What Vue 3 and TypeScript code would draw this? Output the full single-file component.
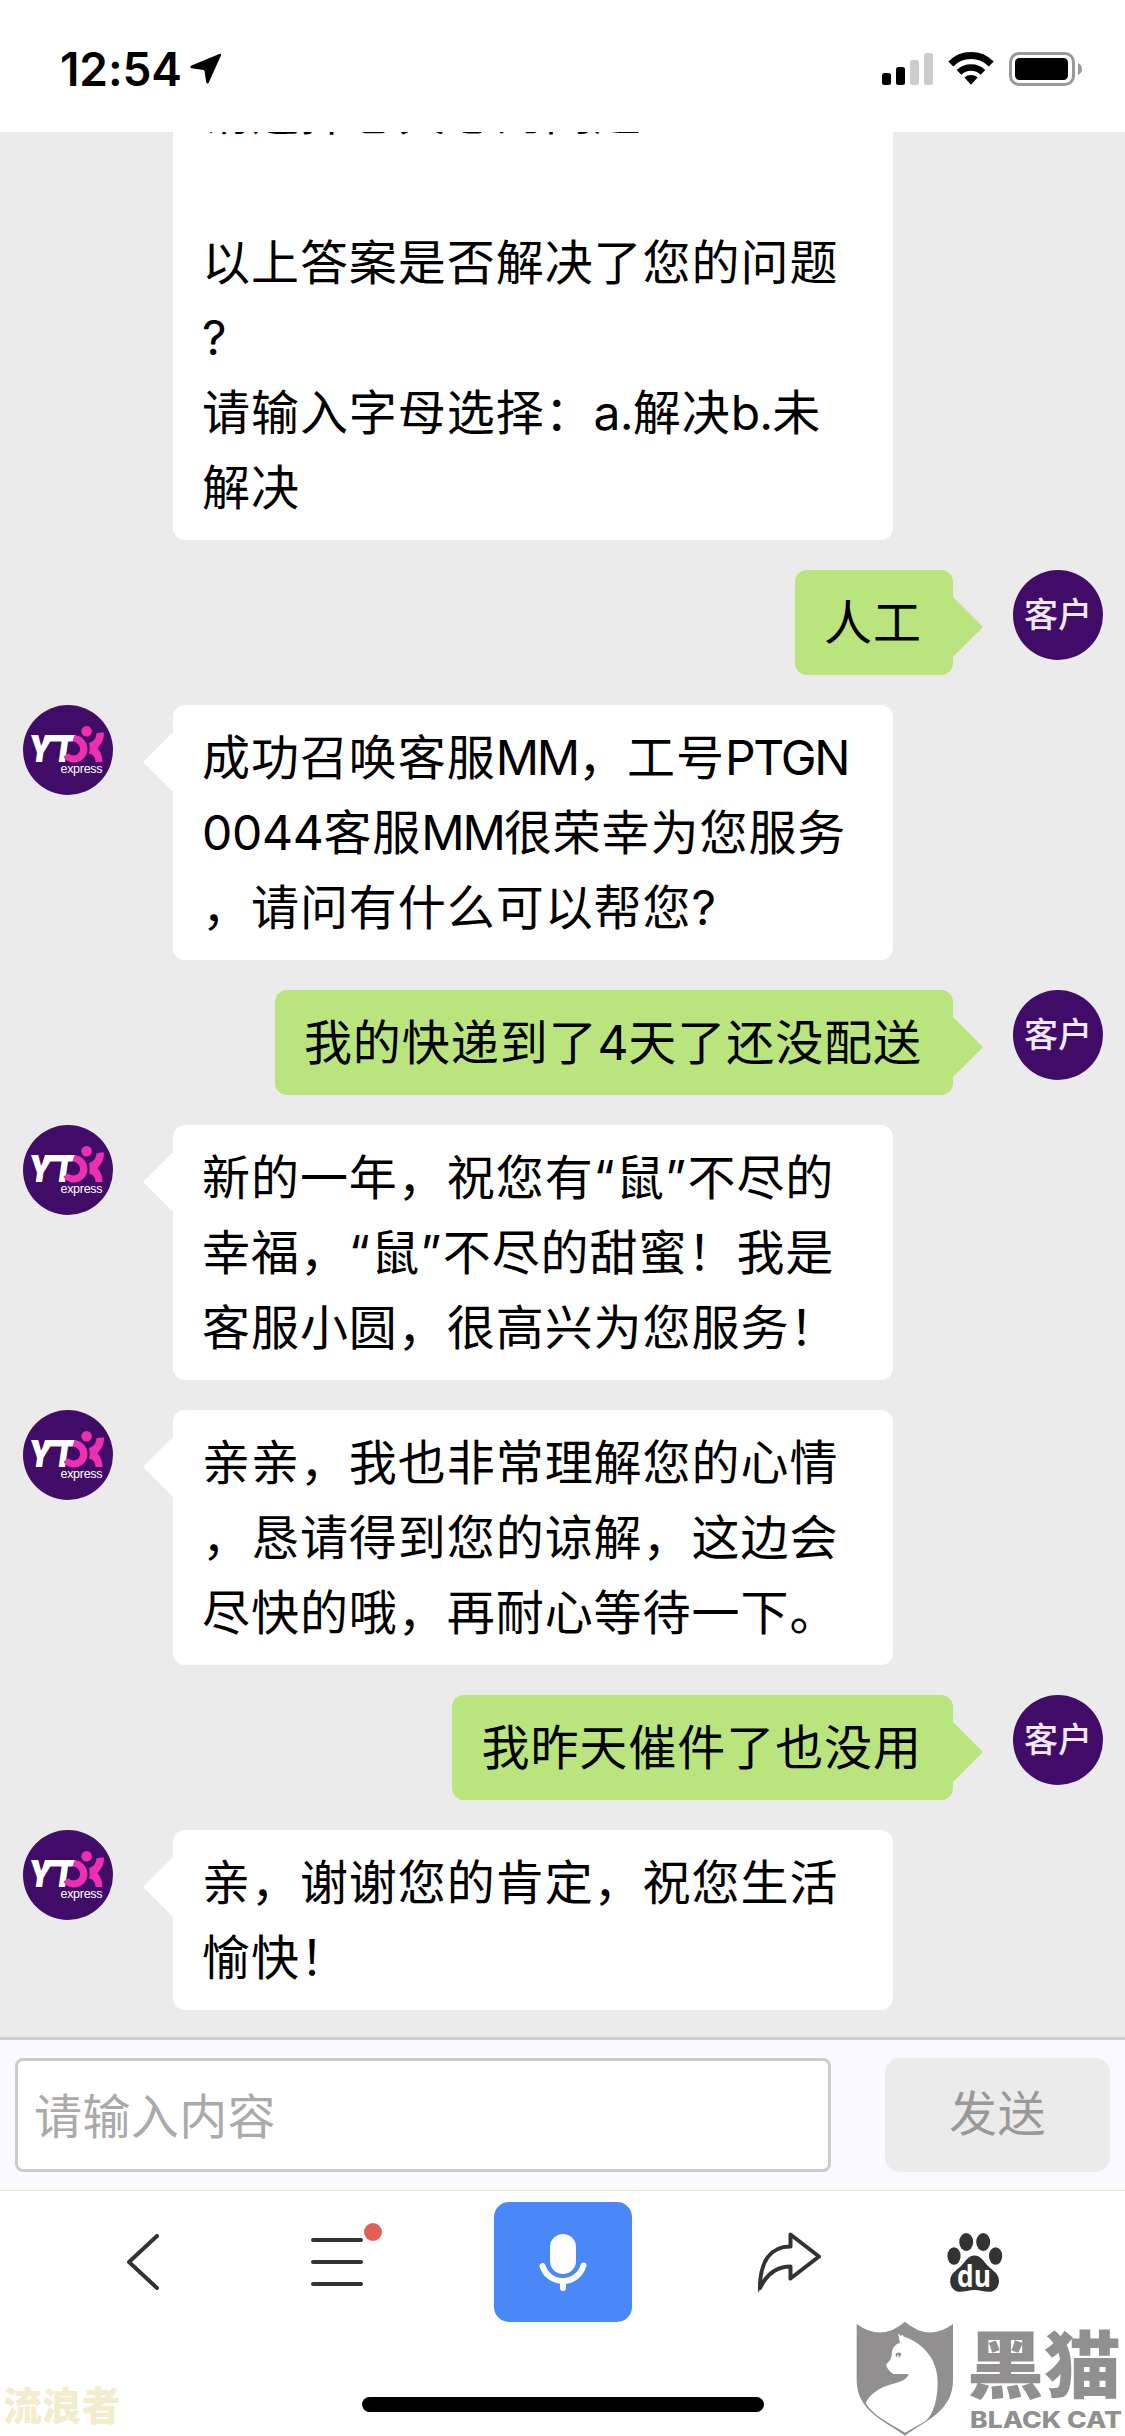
<script setup lang="ts">
interface Segment {
  text: string
  kind: 'cjk' | 'digit' | 'capital' | 'latin' | 'quote'
}

interface Message {
  from: 'agent' | 'customer'
  lines: string[]
}

const messages: Message[] = [
  {
    from: 'agent',
    lines: ['', '', '请选择您关心的问题', '', '以上答案是否解决了您的问题', '?', '请输入字母选择：a.解决b.未', '解决'],
  },
  { from: 'customer', lines: ['人工'] },
  { from: 'agent', lines: ['成功召唤客服MM，工号PTGN', '0044客服MM很荣幸为您服务', '，请问有什么可以帮您?'] },
  { from: 'customer', lines: ['我的快递到了4天了还没配送'] },
  { from: 'agent', lines: ['新的一年，祝您有“鼠”不尽的', '幸福，“鼠”不尽的甜蜜！我是', '客服小圆，很高兴为您服务！'] },
  { from: 'agent', lines: ['亲亲，我也非常理解您的心情', '，恳请得到您的谅解，这边会', '尽快的哦，再耐心等待一下。'] },
  { from: 'customer', lines: ['我昨天催件了也没用'] },
  { from: 'agent', lines: ['亲，谢谢您的肯定，祝您生活', '愉快！'] },
]

function kindOf(text: string): Segment['kind'] {
  if (/^[0-9]/.test(text)) return 'digit'
  if (/^[A-Z]/.test(text)) return 'capital'
  if (/^[“”]/.test(text)) return 'quote'
  return /^[\x20-\x7e]/.test(text) ? 'latin' : 'cjk'
}

// Splits a line so that each script can take its own letter spacing.
function segments(line: string): Segment[] {
  const parts = line.match(/[0-9]+|[A-Z]+|[\x20-\x2f\x3a-\x40\x5b-\x7e]+|[“”]|[^\x20-\x7e“”]+/g) ?? []
  return parts.map((text) => ({ text, kind: kindOf(text) }))
}
</script>

<template>
  <div class="screen">
    <header class="status">
      <div class="clock">
        <span class="time">12:54</span>
        <svg class="location" width="32" height="32" viewBox="0 0 32 32">
          <path d="M29.300 1 Q31.600 .2 30.900 2.600 L18.800 29.500 Q17.300 31.800 16.200 29.300 L14.600 18.200 Q14.400 17.200 13.400 17 L1.500 15.200 Q-.9 14 1.500 12.600Z" />
        </svg>
      </div>
      <div class="indicators">
        <svg width="52" height="34" viewBox="0 0 52 34">
          <rect x="0" y="21" width="9" height="12" rx="2.5" />
          <rect x="14" y="15" width="9" height="18" rx="2.5" />
          <rect x="28" y="8" width="9" height="25" rx="2.5" fill="#ccc" />
          <rect x="42" y="1" width="9" height="32" rx="2.5" fill="#ccc" />
        </svg>
        <svg class="wifi" width="46" height="34" viewBox="0 0 46 34">
          <g fill="none" stroke="#000" stroke-width="7">
            <path d="M2.8 12 A28.5 28.5 0 0 1 43.2 12" />
            <path d="M11 20.4 A17 17 0 0 1 35 20.4" stroke-width="6.5" />
          </g>
          <path d="M16.4 25.6 A10 10 0 0 1 29.6 25.6 L23 32.8Z" />
        </svg>
        <svg class="battery" width="73" height="34" viewBox="0 0 73 34">
          <rect x="1.5" y="1.5" width="63" height="31" rx="8.5" fill="none" stroke="#999" stroke-width="3" />
          <rect x="6" y="6" width="53" height="22" rx="4.5" />
          <path d="M69 11 Q73 13 73 17 T69 23Z" fill="#999" />
        </svg>
      </div>
    </header>

    <main class="chat">
      <div v-for="(message, i) in messages" :key="i" class="row" :class="message.from">
        <div class="avatar">
          <svg v-if="message.from === 'agent' && i > 0" width="90" height="90" viewBox="0 0 90 90">
            <text class="logo-yt" x="5" y="57" textLength="46" lengthAdjust="spacingAndGlyphs">YT</text>
            <path d="M22 30 H51.5 L49.5 36.5 H20Z" fill="#fff" />
            <g fill="#ee2fb1">
              <circle cx="63.6" cy="26.2" r="5.3" />
              <path d="M51.5 30 C58 30.5 64.5 36 64.5 44 C64.5 52 58 57.500 51 57.500 C46 57.500 42 55 40.500 51.500 L45.500 48.500 C50 52.500 57 50 57 44 C57 40 54 37 49.500 36.500Z" />
              <path d="M81 27.500 C81 35 78.500 38.500 74.500 43.200 C77.500 46.500 79.500 51 79.500 57 H72.500 C72.500 52.500 70.500 49.500 66 48.500 C67 45 67 41 65.800 38 C70.500 37 73 33.500 73.400 28.500 Q77 27 81 27.500Z" />
            </g>
            <text class="logo-express" x="37.500" y="68" textLength="42">express</text>
          </svg>
          <span v-else-if="message.from === 'customer'">客户</span>
        </div>
        <div class="bubble">
          <p v-for="(line, n) in message.lines" :key="n">
            <span v-for="(part, k) in segments(line)" :key="k" :class="part.kind">{{ part.text }}</span>
          </p>
        </div>
      </div>
    </main>

    <form class="composer" @submit.prevent>
      <input type="text" placeholder="请输入内容" />
      <button type="button">发送</button>
    </form>

    <nav class="toolbar">
      <svg class="back" width="32" height="56" viewBox="0 0 32 56">
        <path d="M30 2 L2 28 L30 54" fill="none" stroke="#333" stroke-width="4" stroke-linecap="round" stroke-linejoin="round" />
      </svg>
      <svg class="menu" width="72" height="64" viewBox="0 0 72 64">
        <path d="M2 18 H50 M2 40 H50 M2 62 H50" stroke="#333" stroke-width="4" stroke-linecap="round" />
        <circle cx="62" cy="10" r="9" fill="#e55f57" />
      </svg>
      <div class="mic">
        <svg width="48" height="58" viewBox="0 0 48 58">
          <rect x="11" y="0" width="26" height="40" rx="13" fill="#fff" />
          <path d="M3.500 32 C6 40 13.500 47 24 47 S42 40 44.500 31.500 M24 47 V54" fill="none" stroke="#fff" stroke-width="6" stroke-linecap="round" />
        </svg>
      </div>
      <svg class="share" width="64" height="62" viewBox="0 0 64 62">
        <path d="M32.500 14.500 V2.500 L61 24.500 L32.500 46.500 V34.500 C19 34.500 9 41.500 2 56 C2 30 12 14.500 32.500 14.500Z" fill="none" stroke="#333" stroke-width="4" stroke-linejoin="round" />
        <path d="M.1 61 L0 50 L6 50Z" fill="#333" />
      </svg>
      <svg class="paw" width="56" height="60" viewBox="0 0 56 60">
        <g fill="#333">
          <ellipse cx="7" cy="23" rx="6.600" ry="8.700" />
          <ellipse cx="19.200" cy="9" rx="7" ry="9" />
          <ellipse cx="36.200" cy="9" rx="7" ry="9" />
          <ellipse cx="48.600" cy="23" rx="6.600" ry="8.700" />
          <path d="M27.500 22.500 C34 22.500 36.500 28.500 41 33 C46 37.500 52 41 52 48 C52 54 48 58.800 42 58.800 C37 58.800 33 57 27.500 57 S18 58.800 13 58.800 C7 58.800 3.200 54 3.200 48 C3.200 41 9 37.500 14 33 C18.500 28.500 21 22.500 27.500 22.500Z" />
        </g>
        <text class="du" x="10" y="53.500" textLength="34" lengthAdjust="spacingAndGlyphs">du</text>
      </svg>
    </nav>

    <div class="home-indicator"></div>
    <div class="nickname">流浪者</div>
    <div class="brand">
      <svg width="98" height="115" viewBox="0 0 294 345">
        <path d="M2 9 Q77 63 147 2 Q217 63 291 9 V178 C291 268 212 298 147 344 C82 298 2 268 2 178Z" fill="#918f90" />
        <path d="M126 37 L134 45 L139 41 L144 47 C193 62 245 108 245 183 C245 238 232 278 209 300 L147 335 C102 308 50 283 29 246 C42 218 72 198 112 188 C142 181 155 171 158 159 L112 159 C102 153 90 140 91 130 C102 120 107 113 109 88 C112 76 122 68 132 66Z" fill="#fff" />
        <path d="M119 98 Q128 92 136 97 Q134 110 127 111 Q131 104 126 101 Q122 106 122 110 Q118 105 119 98Z" fill="#918f90" />
      </svg>
      <div class="brand-text">
        <span class="brand-cn">黑猫</span>
        <svg class="brand-en" width="154" height="22" viewBox="0 0 154 22">
          <text x="0" y="17" textLength="152" lengthAdjust="spacingAndGlyphs">BLACK CAT</text>
        </svg>
      </div>
    </div>
  </div>
</template>

<style>
body {
  margin: 0;
}
</style>

<style scoped>
.screen {
  position: relative;
  display: flex;
  flex-direction: column;
  width: 1125px;
  height: 2436px;
  overflow: hidden;
  background: #fff;
  color: #000;
  font-family: Inter, "Noto Sans CJK SC", sans-serif;
}
.status {
  flex: none;
  box-sizing: border-box;
  height: 132px;
  padding: 0 43px 0 60px;
  display: flex;
  justify-content: space-between;
}
.clock,
.indicators {
  display: flex;
  align-items: flex-start;
}
.time {
  margin-top: 41px;
  width: 130px;
  font-size: 46px;
  line-height: 56px;
  font-weight: 600;
  letter-spacing: -0.1px;
  white-space: nowrap;
}
.location {
  margin-top: 53px;
}
.indicators {
  padding-top: 52px;
}
.wifi {
  margin-left: 14px;
}
.battery {
  margin-left: 15px;
}
.chat {
  flex: none;
  box-sizing: border-box;
  height: 1905px;
  padding: 0 22px 27px 23px;
  display: flex;
  flex-direction: column;
  justify-content: flex-end;
  gap: 30px;
  overflow: hidden;
  background: #ebebeb;
}
.row {
  flex: none;
  display: flex;
  align-items: flex-start;
  gap: 60px;
}
.row.customer {
  flex-direction: row-reverse;
}
.avatar {
  flex: none;
  width: 90px;
  height: 90px;
  border-radius: 50%;
  overflow: hidden;
  background: #410c68;
  color: #f0eaf4;
  font-size: 34px;
  font-weight: 500;
  line-height: 90px;
  text-align: center;
}
.avatar svg {
  display: block;
}
.logo-yt {
  font: italic 900 37px Inter, sans-serif;
  fill: #fff;
}
.logo-express {
  font: 12.5px "Liberation Sans", sans-serif;
  fill: #fff;
}
.bubble {
  position: relative;
  box-sizing: border-box;
  padding: 15px 31px 15px 29px;
  border-radius: 12px;
  background: #fff;
  font-size: 48px;
  line-height: 75px;
  letter-spacing: 0.95px;
}
.agent .bubble {
  width: 720px;
}
.customer .bubble {
  background: #bae47d;
}
.bubble p {
  margin: 0;
  height: 75px;
  white-space: nowrap;
}
.digit {
  letter-spacing: -0.3px;
}
.capital {
  letter-spacing: -2.2px;
}
.latin {
  letter-spacing: -0.8px;
}
.quote {
  letter-spacing: 1.3px;
}
.bubble::after {
  content: "";
  position: absolute;
  top: 27px;
  border: 30px solid transparent;
}
.agent .bubble::after {
  right: 100%;
  border-left-width: 0;
  border-right-color: #fff;
}
.customer .bubble::after {
  left: 100%;
  border-right-width: 0;
  border-left-color: #bae47d;
}
.composer {
  flex: none;
  box-sizing: border-box;
  height: 153px;
  padding: 18px 15px;
  display: flex;
  justify-content: space-between;
  border-top: 3px solid #ccc;
  background: #f9f9ff;
}
.composer input {
  box-sizing: border-box;
  width: 816px;
  height: 114px;
  padding: 0 16px 5px;
  border: 3px solid #ccc;
  border-radius: 8px;
  background: #fff;
  font: 48px "Noto Sans CJK SC", sans-serif;
  letter-spacing: 0.4px;
  outline: none;
}
.composer input::placeholder {
  color: #aaa;
  opacity: 1;
}
.composer button {
  width: 225px;
  height: 114px;
  padding: 0 0 11px;
  border: 0;
  border-radius: 15px;
  background: #ebebeb;
  color: #999;
  font: 48px "Noto Sans CJK SC", sans-serif;
  letter-spacing: 0.4px;
}
.toolbar {
  flex: none;
  box-sizing: border-box;
  height: 246px;
  padding-left: 127px;
  display: flex;
  align-items: flex-start;
  border-top: 1px solid #e3e3e6;
}
.back {
  margin-top: 43px;
}
.menu {
  margin: 31px 0 0 152px;
}
.mic {
  display: flex;
  justify-content: center;
  box-sizing: border-box;
  width: 138px;
  height: 120px;
  margin: 11px 0 0 111px;
  padding-top: 32px;
  border-radius: 15px;
  background: #4a87f7;
}
.share {
  margin: 41px 0 0 126px;
}
.paw {
  margin: 42px 0 0 125px;
}
.du {
  font: 700 31px "Open Sans", sans-serif;
  fill: #fff;
}
.home-indicator {
  position: absolute;
  left: 362px;
  top: 2397px;
  width: 402px;
  height: 15px;
  border-radius: 8px;
  background: #000;
}
.nickname {
  position: absolute;
  left: 3px;
  top: 2373px;
  font: 900 39px/60px "Noto Sans CJK SC", sans-serif;
  letter-spacing: 0.3px;
  color: #f3edcd;
}
.brand {
  position: absolute;
  left: 856px;
  top: 2321px;
  width: 269px;
  height: 115px;
  display: flex;
  gap: 16px;
}
.brand-text {
  display: flex;
  flex-direction: column;
  color: #918f90;
}
.brand-cn {
  height: 90px;
  margin-left: -3px;
  font: 900 77px/82px "Noto Sans CJK SC", sans-serif;
  white-space: nowrap;
  transform: scaleY(0.94);
  transform-origin: 0 18px;
}
.brand-en text {
  font: 800 22.5px Inter, sans-serif;
  fill: #918f90;
}
</style>
